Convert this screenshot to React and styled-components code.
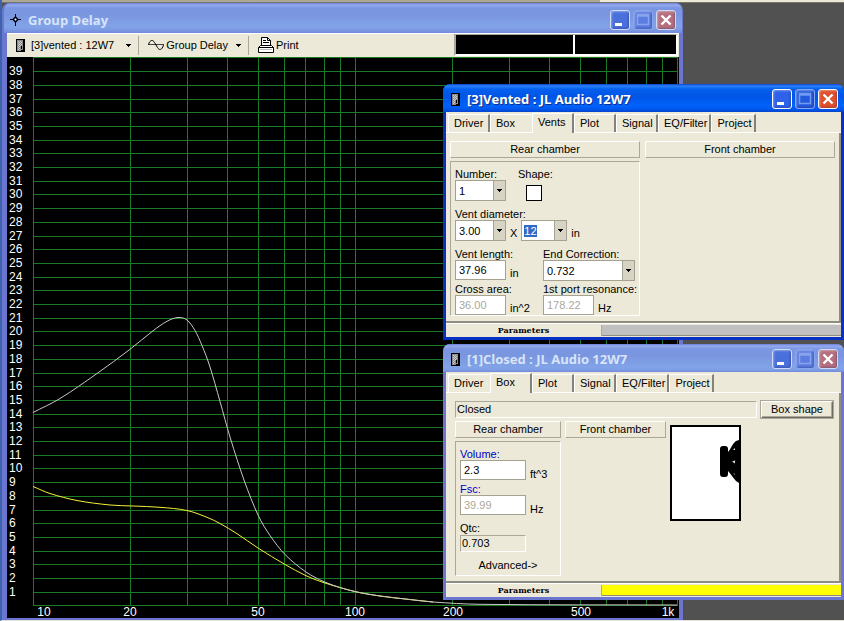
import React, { useEffect, useRef } from "react";
import styled, { createGlobalStyle, css } from "styled-components";

const GlobalStyle = createGlobalStyle`
  * {
    box-sizing: border-box;
  }
  body {
    margin: 0;
    background: #515151;
    font-family: "Liberation Sans", Arial, sans-serif;
    font-size: 11px;
    line-height: 12px;
    color: #000;
  }
  button, input, select {
    font: inherit;
    color: inherit;
    margin: 0;
    padding: 0;
    border: 0;
    border-radius: 0;
  }
`;

const FACE = "#ece9d8";

const raised = css`
  border: 1px solid;
  border-color: #fff #aca899 #aca899 #fff;
`;

const sunken = css`
  border: 1px solid;
  border-color: #aca899 #fff #fff #aca899;
`;

/* ---------- desktop and windows ---------- */

const Desktop = styled.main`
  position: relative;
  height: 100vh;
  min-height: 600px;
  overflow: hidden;
  background: #515151;
  border-left: 2px solid #3c63ac;
  border-bottom: 1px solid #e4e2d6;
`;

const DockEdge = styled.div`
  height: 3px;
  background: linear-gradient(90deg, #aca899 71%, #ece9d8 71%);
  border-bottom: 1px solid #77756a;
`;

const Window = styled.section`
  position: absolute;
  display: flex;
  flex-direction: column;
  background: ${(p) => (p.$active ? "#0a3fd0" : "#7181d8")};
  border-style: solid;
  border-color: ${(p) => (p.$active ? "#0831c4" : "#6a76d0")};
  border-radius: 7px 7px 0 0;
`;

const ChartWindow = styled(Window)`
  top: 3px;
  left: 0;
  right: 161px;
  bottom: 0;
  border-width: 0 4px 2px 5px;
`;

const ToolWindow = styled(Window)`
  top: ${(p) => p.$top}px;
  right: 0;
  width: 401px;
  border-width: 0 3px 3px 3px;
`;

const TitleBar = styled.header`
  display: flex;
  align-items: center;
  gap: 7px;
  height: ${(p) => (p.$large ? 30 : 28)}px;
  margin: 0 -3px;
  padding: ${(p) => (p.$large ? "4px 6px 0 6px" : "2px 6px 0 8px")};
  border-radius: 7px 7px 0 0;
  background: ${(p) =>
    p.$active
      ? "linear-gradient(#0a3fd0 0, #2b83f6 2px, #0560ee 5px, #0055e5 12px, #0062fb 22px, #0058ee 25px, #0344cf 100%)"
      : "linear-gradient(#6b7fdc 0, #94aaee 2px, #7b96e2 5px, #7a96df 12px, #82a3e8 23px, #7e9ee5 26px, #7388dc 100%)"};
`;

const Title = styled.h1`
  flex: 1;
  margin: 0;
  font-family: "Open Sans", "Noto Sans", sans-serif;
  font-size: 13px;
  line-height: 16px;
  font-weight: 700;
  white-space: nowrap;
  color: ${(p) => (p.$active ? "#fff" : "#d8e4f8")};
  text-shadow: ${(p) => (p.$active ? "1px 1px 0 #0f2f8a" : "none")};
`;

const CaptionButtons = styled.div`
  display: flex;
  gap: 3px;
`;

const captionColors = {
  min: ["#2f62e8", "#4a70dc", "#fff"],
  max: ["#2458dd", "#5b7ce0", "#6f9af0"],
  close: ["#e0502c", "#b5707f", "#fff"],
};

const CaptionButton = styled.button`
  display: grid;
  place-items: center;
  width: 20px;
  height: 20px;
  border: 1px solid ${(p) => (p.$kind === "max" ? "#86a6f0" : p.$active ? "#fff" : "#cfdaf6")};
  border-radius: 3px;
  background: ${(p) => captionColors[p.$kind][p.$active ? 0 : 1]};
  color: ${(p) => (p.$kind === "max" && !p.$active ? "#8ba3ec" : captionColors[p.$kind][2])};
  box-shadow: inset 1px 1px 2px rgba(255, 255, 255, 0.35), inset -1px -1px 2px rgba(0, 0, 60, 0.25);
`;

/* ---------- chart window ---------- */

const Toolbar = styled.div`
  display: flex;
  align-items: center;
  height: 24px;
  padding: 0 1px 1px 9px;
  border-top: 1px solid #fff;
  background: ${FACE};
`;

const ToolButton = styled.button`
  display: flex;
  align-items: center;
  height: 20px;
  gap: ${(p) => p.$gap || 2}px;
  background: none;
  white-space: nowrap;

  .arrow {
    margin: 0 7px 0 6px;
  }
`;

const Separator = styled.span`
  width: 1px;
  height: 19px;
  margin-right: 9px;
  background: #aca899;
`;

const Readouts = styled.div`
  display: flex;
  gap: 2px;
  width: 224px;
  height: 22px;
  margin-left: auto;
  border: 2px solid #fff;
  border-left-color: #aca899;
  border-top: 1px solid #aca899;
  background: #fff;
`;

const Readout = styled.output`
  flex: ${(p) => p.$grow};
  background: #000;
`;

const Chart = styled.svg`
  display: block;
  flex: 1;
  width: 100%;
  min-height: 0;
  overflow: visible;
  background: #000;
  font-size: 12px;
  fill: #fff;
`;

/* ---------- tool windows ---------- */

const Tabs = styled.nav`
  display: flex;
  align-items: flex-end;
  height: 21px;
  padding-left: 2px;
  background: ${FACE};
  box-shadow: inset 0 -1px 0 #fff;
`;

const Tab = styled.button`
  height: ${(p) => (p.$selected ? 20 : 18)}px;
  min-width: 42px;
  margin-bottom: ${(p) => (p.$selected ? 0 : 1)}px;
  padding: 0 2px ${(p) => (p.$selected ? 3 : 1)}px 5px;
  text-align: left;
  white-space: nowrap;
  background: ${FACE};
  border-top: 1px solid #fff;
  border-left: 1px solid #fff;
  border-right: 2px solid ${(p) => (p.$edge ? "#85827a" : FACE)};
`;

const Panel = styled.div`
  flex: 1;
  padding: ${(p) => p.$pad};
  background: ${FACE};
  border-right: 2px solid #8f8c80;
  border-bottom: 2px solid #8f8c80;
`;

const Columns = styled.div`
  display: flex;
  align-items: flex-start;
  gap: ${(p) => p.$gap}px;
`;

const Chamber = styled.button`
  ${raised}
  width: ${(p) => p.$width}px;
  height: 17px;
  padding-bottom: 2px;
  background: ${FACE};
`;

const ChamberPair = styled(Columns)`
  margin-top: 3px;
`;

const Group = styled.div`
  ${sunken}
  display: flex;
  flex-direction: column;
  gap: 7px;
  width: ${(p) => p.$width}px;
  margin-top: 3px;
  padding: ${(p) => p.$pad};
`;

const Stack = styled.div`
  display: flex;
  flex-direction: column;
  gap: ${(p) => p.$gap}px;
`;

const Pair = styled.div`
  display: grid;
  grid-template-columns: 88px 1fr;
`;

const Field = styled.div`
  display: flex;
  flex-direction: column;
  gap: ${(p) => p.$gap || 0}px;
  color: ${(p) => p.$color || "#000"};
  white-space: nowrap;
`;

const Control = styled.div`
  display: flex;
  align-items: ${(p) => (p.$low ? "flex-end" : "center")};
  gap: 4px;
  color: #000;
`;

const Unit = styled.span`
  padding-top: 5px;
`;

const TextBox = styled.input`
  width: ${(p) => p.$width}px;
  height: 20px;
  padding-left: 3px;
  border: 1px solid #a5a292;
  background: #fff;

  &:disabled {
    color: #aca899;
  }
  &::selection {
    color: #fff;
    background: #316ac5;
  }
  &:focus {
    outline: none;
  }
`;

const Combo = styled.div`
  display: flex;
  width: ${(p) => p.$width}px;
  height: 21px;
  border: 1px solid #a5a292;
  background: #fff;
`;

const ComboSelect = styled.select`
  flex: 1;
  min-width: 0;
  padding-left: 3px;
  appearance: none;
  background: #fff;
`;

const ComboInput = styled(TextBox)`
  flex: 1;
  min-width: 0;
  height: auto;
  padding-left: 2px;
  border: 0;
`;

const ComboArrow = styled.span`
  display: grid;
  place-items: center;
  width: 12px;
  border-left: 1px solid #a5a292;
  background: #d8d4c4;
`;

const ShapeBox = styled.input`
  appearance: none;
  width: 16px;
  height: 16px;
  margin: 5px 0 0 8px;
  border: 1px solid #000;
  background: #fff;
`;

const ReadOnly = styled.input`
  ${sunken}
  width: ${(p) => p.$width}px;
  height: 17px;
  padding: 0 0 1px 1px;
  background: ${FACE};
`;

const BoxShapeButton = styled.button`
  width: 72px;
  height: 17px;
  padding-bottom: 1px;
  border: 1px solid;
  border-color: #fff #6f6d62 #6f6d62 #fff;
  outline: 1px solid #aca899;
  background: ${FACE};
  box-shadow: inset -1px -1px 0 #aca899;
`;

const LinkButton = styled.button`
  background: none;
`;

const BoxDrawing = styled.svg`
  display: block;
  margin-top: 7px;
`;

const Footer = styled.footer`
  display: flex;
  height: 14px;
  padding: 1px 0;
  border-top: 1px solid #fff;
  background: ${FACE};
`;

const ParametersButton = styled.button`
  width: 156px;
  padding-bottom: 2px;
  background: ${FACE};
  border-right: 1px solid #aca899;
  font-family: "DejaVu Serif", serif;
  font-size: 8px;
  line-height: 10px;
  font-weight: 700;
`;

const ColorStrip = styled.div`
  flex: 1;
  background: ${(p) => p.$color};
  border-bottom: 1px solid #8f8c80;
`;

/* ---------- icons ---------- */

const Arrow = () => (
  <svg className="arrow" width="5" height="3" viewBox="0 0 5 3" shapeRendering="crispEdges" aria-hidden="true">
    <path d="M0 0h5v1H4v1H3v1H2V2H1V1H0z" />
  </svg>
);

const CrossIcon = () => (
  <svg width="11" height="12" viewBox="0 0 11 12" fill="none" stroke="#000" aria-hidden="true">
    <path d="M5.5 0v4M5.5 7v5M0 5.5h4M7 5.5h4" />
    <path d="M5.5 3l2.500 2.500L5.500 8 3 5.500z" strokeWidth="1.300" />
    <path d="M5 5.500h1" stroke="#fff" />
  </svg>
);

const BoxIcon = () => (
  <svg width="9" height="13" viewBox="0 0 9 13" shapeRendering="crispEdges" aria-hidden="true">
    <path fill="#000" d="M0 0h9v13H0z" />
    <path fill="#8c8c8c" d="M1 1h6v11H1z" />
    <path fill="#ccc" d="M2 2h1v1H2zM4 2h1v1H4zM3 3h1v1H3zM5 3h1v1H5zM2 4h1v1H2zM4 4h1v1H4zM3 5h1v1H3zM5 5h1v1H5zM2 6h1v1H2zM4 6h1v1H4zM3 7h1v1H3zM2 8h1v1H2zM3 9h1v1H3zM2 10h1v1H2z" />
    <path fill="#000" d="M5 7h1v3H5zM5 11h2v1H5z" />
  </svg>
);

const WaveIcon = () => (
  <svg width="16" height="12" viewBox="0 0 16 12" fill="none" stroke="#000" aria-hidden="true">
    <path d="M0 5.500h16" stroke="#444" />
    <path d="M.5 5.500C2 .5 5 .5 6.500 3.500l3 5c1.500 3 4.500 3 6-2.500" />
  </svg>
);

const PrinterIcon = () => (
  <svg width="16" height="16" viewBox="0 0 16 16" fill="#fff" stroke="#000" aria-hidden="true">
    <path d="M3.500 8.500v-8h6l3 3v5z" />
    <path d="M9.500 .5v3h3M5 3.500h3M5 5.500h6" fill="none" />
    <path d="M.5 10.500l2-2h11l2 2v5h-15z" />
    <path d="M.5 10.500h15" fill="none" />
    <path d="M2 12.500h12" stroke="#bbb" />
  </svg>
);

const captionIcons = {
  min: <path d="M4 13.500h7" strokeWidth="3" />,
  max: <path d="M3.500 13.500v-10h11v10zM3 5h12" strokeWidth="1.500" />,
  close: <path d="M4.500 4.500l9 9M13.500 4.500l-9 9" strokeWidth="2.400" />,
};

const captionNames = { min: "Minimize", max: "Maximize", close: "Close" };

const Caption = ({ active }) => (
  <CaptionButtons>
    {["min", "max", "close"].map((kind) => (
      <CaptionButton key={kind} $kind={kind} $active={active} aria-label={captionNames[kind]}>
        <svg width="18" height="18" viewBox="0 0 18 18" fill="none" stroke="currentColor" aria-hidden="true">
          {captionIcons[kind]}
        </svg>
      </CaptionButton>
    ))}
  </CaptionButtons>
);

/* ---------- chart ---------- */

const PLOT = { left: 26, right: 670, bottom: 548 };
const DECADE = 322;
const STEP = 13.7;

const ventedCurve = [
  [26, 355.5], [53, 341.5], [90, 316.5], [123, 292.3], [146, 273.8], [160, 264.3], [171, 260.5],
  [180, 263], [188, 273.5], [195, 288.5], [203, 310], [213, 344.5], [223, 380], [237, 423],
  [251, 458], [263, 478.5], [278, 497.5], [299, 515], [317, 524.7], [333, 530.5], [349, 534.8],
  [373, 539], [400, 542.2], [426, 545], [473, 547.3], [670, 548],
];

const closedCurve = [
  [26, 429.5], [43, 436.5], [70, 443.5], [103, 448], [126, 449], [153, 450.3], [180, 453.5],
  [200, 460.3], [213, 466.5], [230, 476.7], [251, 491], [278, 507.5], [299, 518.7], [317, 525.7],
  [349, 534.8], [373, 539], [400, 542.2], [426, 545],
];

const xTicks = [
  [10, "10", 37], [20, "20", 123], [50, "50", 251], [100, "100", 348],
  [200, "200", 446], [500, "500", 574], [1000, "1k", 661],
];

const smooth = (pts) => {
  const slope = (i) => {
    const a = pts[Math.max(i - 1, 0)];
    const b = pts[Math.min(i + 1, pts.length - 1)];
    return (b[1] - a[1]) / (b[0] - a[0]);
  };
  return pts.reduce((d, [x, y], i) => {
    if (i === 0) return `M${x} ${y}`;
    const [px, py] = pts[i - 1];
    const h = (x - px) / 3;
    return `${d}C${px + h} ${py + h * slope(i - 1)} ${x - h} ${y - h * slope(i)} ${x} ${y}`;
  }, "");
};

const freqX = (f) => Math.round(PLOT.left + DECADE * Math.log10(f / 10));
const delayY = (ms) => Math.floor(PLOT.bottom + 0.9 - ms * STEP);

const GroupDelayChart = () => {
  const freqs = [];
  for (let d = 10; d <= 100; d *= 10) {
    for (let n = 1; n < 10; n++) freqs.push(d * n);
  }
  freqs.push(1000);
  const delays = [...Array(40)].map((_, i) => i + 1);

  return (
    <Chart viewBox="0 0 672 561" role="img" aria-label="Group Delay">
      <g fill="#1b7a24" shapeRendering="crispEdges">
        {freqs.map((f) => (
          <rect key={f} x={freqX(f)} y="0" width="1" height={PLOT.bottom + 1} />
        ))}
        {[0, ...delays].map((ms) => (
          <rect key={ms} x={PLOT.left} y={delayY(ms)} width={PLOT.right - PLOT.left} height="1" />
        ))}
      </g>
      <path d={smooth(closedCurve)} fill="none" stroke="#f4f03c" />
      <path d={smooth(ventedCurve)} fill="none" stroke="#c8c8c8" />
      {delays.slice(0, 39).map((ms) => (
        <text key={ms} x="2" y={delayY(ms) + 4}>{ms}</text>
      ))}
      {xTicks.map(([f, label, x]) => (
        <text key={f} x={x} y="559" textAnchor="middle">{label}</text>
      ))}
    </Chart>
  );
};

/* ---------- shared pieces ---------- */

const TabStrip = ({ items, selected }) => (
  <Tabs>
    {items.map((item, i) => (
      <Tab key={item} $selected={item === selected} $edge={items[i + 1] !== selected}>
        {item}
      </Tab>
    ))}
  </Tabs>
);

const SelectCombo = ({ id, value, width }) => (
  <Combo $width={width}>
    <ComboSelect id={id} defaultValue={value}>
      <option>{value}</option>
    </ComboSelect>
    <ComboArrow><Arrow /></ComboArrow>
  </Combo>
);

const ParametersBar = ({ color }) => (
  <Footer>
    <ParametersButton>Parameters</ParametersButton>
    <ColorStrip $color={color} />
  </Footer>
);

const VentedWindow = () => {
  const heightRef = useRef(null);

  useEffect(() => {
    heightRef.current.focus();
    heightRef.current.select();
  }, []);

  return (
    <ToolWindow $top={84} $active>
      <TitleBar $active>
        <BoxIcon />
        <Title $active>[3]Vented : JL Audio 12W7</Title>
        <Caption active />
      </TitleBar>
      <TabStrip items={["Driver", "Box", "Vents", "Plot", "Signal", "EQ/Filter", "Project"]} selected="Vents" />
      <Panel $pad="8px 4px 5px 4px">
        <Columns $gap={5}>
          <Chamber $width={190}>Rear chamber</Chamber>
          <Chamber $width={190}>Front chamber</Chamber>
        </Columns>
        <Group $width={190} $pad="6px 4px 0 4px">
          <Columns $gap={12}>
            <Field>
              <label htmlFor="number">Number:</label>
              <SelectCombo id="number" value="1" width={51} />
            </Field>
            <Field>
              <label htmlFor="shape">Shape:</label>
              <ShapeBox id="shape" type="checkbox" />
            </Field>
          </Columns>
          <Field>
            <label htmlFor="diameter">Vent diameter:</label>
            <Control>
              <SelectCombo id="diameter" value="3.00" width={51} />
              <Unit>X</Unit>
              <Combo $width={46}>
                <ComboInput ref={heightRef} defaultValue="12" aria-label="Vent height" />
                <ComboArrow><Arrow /></ComboArrow>
              </Combo>
              <Unit>in</Unit>
            </Control>
          </Field>
          <Stack $gap={2}>
            <Pair>
              <Field>
                <label htmlFor="length">Vent length:</label>
                <Control>
                  <TextBox id="length" $width={51} defaultValue="37.96" />
                  <Unit>in</Unit>
                </Control>
              </Field>
              <Field>
                <label htmlFor="correction">End Correction:</label>
                <SelectCombo id="correction" value="0.732" width={92} />
              </Field>
            </Pair>
            <Pair>
              <Field>
                <label htmlFor="area">Cross area:</label>
                <Control>
                  <TextBox id="area" $width={51} defaultValue="36.00" disabled />
                  <Unit>in^2</Unit>
                </Control>
              </Field>
              <Field>
                <label htmlFor="resonance">1st port resonance:</label>
                <Control>
                  <TextBox id="resonance" $width={51} defaultValue="178.22" disabled />
                  <Unit>Hz</Unit>
                </Control>
              </Field>
            </Pair>
          </Stack>
        </Group>
      </Panel>
      <ParametersBar color="#c0c0c0" />
    </ToolWindow>
  );
};

const SpeakerBox = () => (
  <BoxDrawing width="71" height="96" viewBox="0 0 71 96" role="img" aria-label="Closed box with driver">
    <path d="M1 1h69v94H1z" fill="#fff" stroke="#000" strokeWidth="2" />
    <rect x="50" y="21" width="8" height="31" rx="3" />
    <path d="M57 27h1c3-3 4-8 8-11l3-1v43l-3-2c-3-3-5-7-8-10h-1z" />
    <path d="M63 25l2-2v2zM62 36.500l3-1v3zM63 48l2 1v1z" fill="#ddd" />
  </BoxDrawing>
);

const ClosedWindow = () => (
  <ToolWindow $top={344}>
    <TitleBar>
      <BoxIcon />
      <Title>[1]Closed : JL Audio 12W7</Title>
      <Caption />
    </TitleBar>
    <TabStrip items={["Driver", "Box", "Plot", "Signal", "EQ/Filter", "Project"]} selected="Box" />
    <Panel $pad="8px 6px 5px 9px">
      <Columns $gap={4}>
        <ReadOnly $width={302} defaultValue="Closed" readOnly aria-label="Box type" />
        <BoxShapeButton>Box shape</BoxShapeButton>
      </Columns>
      <Columns $gap={4}>
        <div>
          <ChamberPair $gap={4}>
            <Chamber $width={106}>Rear chamber</Chamber>
            <Chamber $width={101}>Front chamber</Chamber>
          </ChamberPair>
          <Group $width={106} $pad="6px 4px 4px 4px">
            <Stack $gap={3}>
              <Field $color="#0000c8">
                <label htmlFor="volume">Volume:</label>
                <Control $low>
                  <TextBox id="volume" $width={66} defaultValue="2.3" />
                  <Unit>ft^3</Unit>
                </Control>
              </Field>
              <Field $color="#0000c8">
                <label htmlFor="fsc">Fsc:</label>
                <Control $low>
                  <TextBox id="fsc" $width={66} defaultValue="39.99" disabled />
                  <Unit>Hz</Unit>
                </Control>
              </Field>
            </Stack>
            <Field $gap={1}>
              <label htmlFor="qtc">Qtc:</label>
              <ReadOnly id="qtc" $width={66} defaultValue="0.703" readOnly />
            </Field>
            <LinkButton>Advanced-&gt;</LinkButton>
          </Group>
        </div>
        <SpeakerBox />
      </Columns>
    </Panel>
    <ParametersBar color="#ffff00" />
  </ToolWindow>
);

const App = () => (
  <>
    <GlobalStyle />
    <Desktop>
      <DockEdge />
      <ChartWindow>
        <TitleBar $large>
          <CrossIcon />
          <Title>Group Delay</Title>
          <Caption />
        </TitleBar>
        <Toolbar>
          <ToolButton $gap={6}>
            <BoxIcon />
            [3]vented : 12W7
            <Arrow />
          </ToolButton>
          <Separator />
          <ToolButton>
            <WaveIcon />
            Group Delay
            <Arrow />
          </ToolButton>
          <Separator />
          <ToolButton>
            <PrinterIcon />
            Print
          </ToolButton>
          <Readouts>
            <Readout $grow={117} />
            <Readout $grow={101} />
          </Readouts>
        </Toolbar>
        <GroupDelayChart />
      </ChartWindow>
      <VentedWindow />
      <ClosedWindow />
    </Desktop>
  </>
);

export default App;
